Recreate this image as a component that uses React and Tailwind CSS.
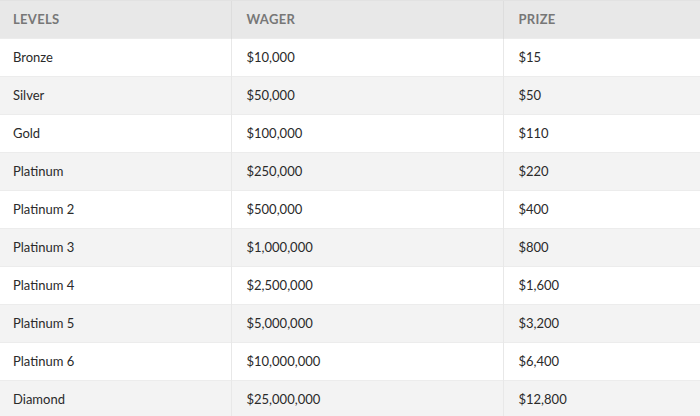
import React from "react";

const rows = [
  ["Bronze", "$10,000", "$15"],
  ["Silver", "$50,000", "$50"],
  ["Gold", "$100,000", "$110"],
  ["Platinum", "$250,000", "$220"],
  ["Platinum 2", "$500,000", "$400"],
  ["Platinum 3", "$1,000,000", "$800"],
  ["Platinum 4", "$2,500,000", "$1,600"],
  ["Platinum 5", "$5,000,000", "$3,200"],
  ["Platinum 6", "$10,000,000", "$6,400"],
  ["Diamond", "$25,000,000", "$12,800"],
];

export default function App() {
  return (
    <div className="w-[700px] h-[416px] overflow-hidden bg-white" style={{ fontFamily: "Lato, 'Open Sans', sans-serif" }}>
      <table className="w-full border-collapse table-fixed">
        <colgroup>
          <col className="w-[231px]" />
          <col className="w-[272px]" />
          <col />
        </colgroup>
        <thead>
          <tr className="bg-[#e8e8e8] h-[38px]">
            {["LEVELS", "WAGER", "PRIZE"].map((h, i) => (
              <th
                key={h}
                className={`text-left font-bold text-[13px] text-[#777777] tracking-[0.3px] px-[13px] border-t border-[#e2e2e2] ${i > 0 ? "border-l border-l-[#dddddd] pl-[15px]" : ""}`}
              >
                {h}
              </th>
            ))}
          </tr>
        </thead>
        <tbody>
          {rows.map((r, idx) => (
            <tr key={r[0]} className={`h-[38px] border-t border-[#ececec] ${idx % 2 === 1 ? "bg-[#f3f3f3]" : "bg-white"}`}>
              {r.map((c, i) => (
                <td
                  key={i}
                  className={`text-[13px] text-[#2a2a2a] px-[13px] ${i > 0 ? "border-l border-l-[#e8e8e8] pl-[15px]" : ""}`}
                >
                  {c}
                </td>
              ))}
            </tr>
          ))}
        </tbody>
      </table>
    </div>
  );
}
